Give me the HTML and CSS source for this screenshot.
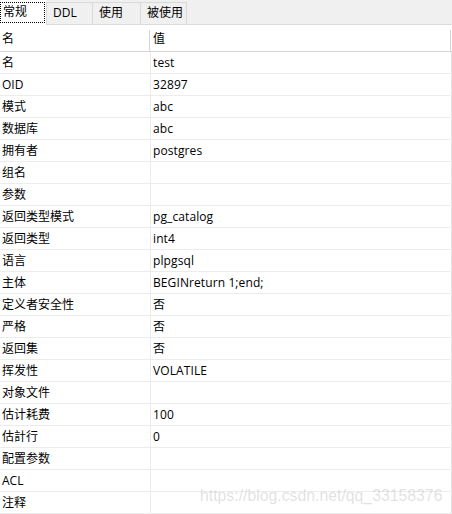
FILE: index.html
```html
<!DOCTYPE html>
<html>
<head>
<meta charset="utf-8">
<link rel="stylesheet" href="styles.css">
</head>
<body>
<div class="tabs">
  <div class="tab active"><span class="focus">常规</span></div>
  <div class="tab">DDL</div>
  <div class="tab">使用</div>
  <div class="tab last">被使用</div>
</div>
<div class="grid">
  <div class="row head"><div class="c1">名</div><div class="c2">值</div></div>
  <div class="row"><div class="c1">名</div><div class="c2">test</div></div>
  <div class="row"><div class="c1">OID</div><div class="c2">32897</div></div>
  <div class="row"><div class="c1">模式</div><div class="c2">abc</div></div>
  <div class="row"><div class="c1">数据库</div><div class="c2">abc</div></div>
  <div class="row"><div class="c1">拥有者</div><div class="c2">postgres</div></div>
  <div class="row"><div class="c1">组名</div><div class="c2"></div></div>
  <div class="row"><div class="c1">参数</div><div class="c2"></div></div>
  <div class="row"><div class="c1">返回类型模式</div><div class="c2">pg_catalog</div></div>
  <div class="row"><div class="c1">返回类型</div><div class="c2">int4</div></div>
  <div class="row"><div class="c1">语言</div><div class="c2">plpgsql</div></div>
  <div class="row"><div class="c1">主体</div><div class="c2">BEGINreturn 1;end;</div></div>
  <div class="row"><div class="c1">定义者安全性</div><div class="c2">否</div></div>
  <div class="row"><div class="c1">严格</div><div class="c2">否</div></div>
  <div class="row"><div class="c1">返回集</div><div class="c2">否</div></div>
  <div class="row"><div class="c1">挥发性</div><div class="c2">VOLATILE</div></div>
  <div class="row"><div class="c1">对象文件</div><div class="c2"></div></div>
  <div class="row"><div class="c1">估计耗费</div><div class="c2">100</div></div>
  <div class="row"><div class="c1">估計行</div><div class="c2">0</div></div>
  <div class="row"><div class="c1">配置参数</div><div class="c2"></div></div>
  <div class="row"><div class="c1">ACL</div><div class="c2"></div></div>
  <div class="row"><div class="c1">注释</div><div class="c2"></div></div>
</div>
<div class="watermark">https://blog.csdn.net/qq_33158376</div>
</body>
</html>
```
FILE: styles.css
```css
html, body {
  margin: 0;
  padding: 0;
  background: #ffffff;
}
body {
  width: 452px;
  height: 514px;
  overflow: hidden;
  position: relative;
  font-family: "Open Sans", "Noto Sans CJK SC", sans-serif;
  font-size: 12px;
  color: #000;
}
.tabs {
  display: flex;
  height: 24px;
  background: #f0f0f0;
  border-bottom: 1px solid #dadada;
}
.tab {
  box-sizing: border-box;
  margin-top: 2px;
  height: 22px;
  width: 46px;
  border-top: 1px solid #d9d9d9;
  border-left: 1px solid #d9d9d9;
  padding-left: 6px;
  line-height: 20px;
  background: #f0f0f0;
}
.tab:nth-child(3) { width: 48px; }
.tab.last { width: 47px; border-right: 1px solid #d9d9d9; }
.tab.active {
  margin-top: 0;
  height: 25px;
  width: 46px;
  border: none;
  padding: 2px 1px 0 0;
  background: #ffffff;
  margin-bottom: -1px;
}
.focus {
  display: block;
  box-sizing: border-box;
  height: 21px;
  border: 1px dotted #000;
  padding-left: 2px;
  line-height: 18px;
}
.row {
  display: flex;
  height: 22px;
  box-sizing: border-box;
  border-bottom: 1px solid #ececec;
  line-height: 21px;
}
.row.head {
  height: 27px;
  border-bottom: 1px solid #d5d5d5;
  line-height: 28px;
}
.c1 {
  box-sizing: border-box;
  width: 151px;
  padding-left: 2px;
  border-right: 1px solid #ececec;
  white-space: nowrap;
}
.c2 {
  box-sizing: border-box;
  width: 301px;
  padding-left: 2px;
  border-right: 1px solid #e3e3e3;
  white-space: nowrap;
  letter-spacing: 0.1px;
}
.head .c1, .head .c2 {
  border-right-color: transparent;
  background-image: linear-gradient(#d5d5d5, #d5d5d5);
  background-size: 1px 21px;
  background-position: right bottom;
  background-repeat: no-repeat;
}
.watermark {
  position: absolute;
  left: 200px;
  top: 487px;
  font-family: "Liberation Sans", Arial, sans-serif;
  font-size: 15.8px;
  color: rgba(170, 170, 170, 0.35);
  white-space: nowrap;
}
```
